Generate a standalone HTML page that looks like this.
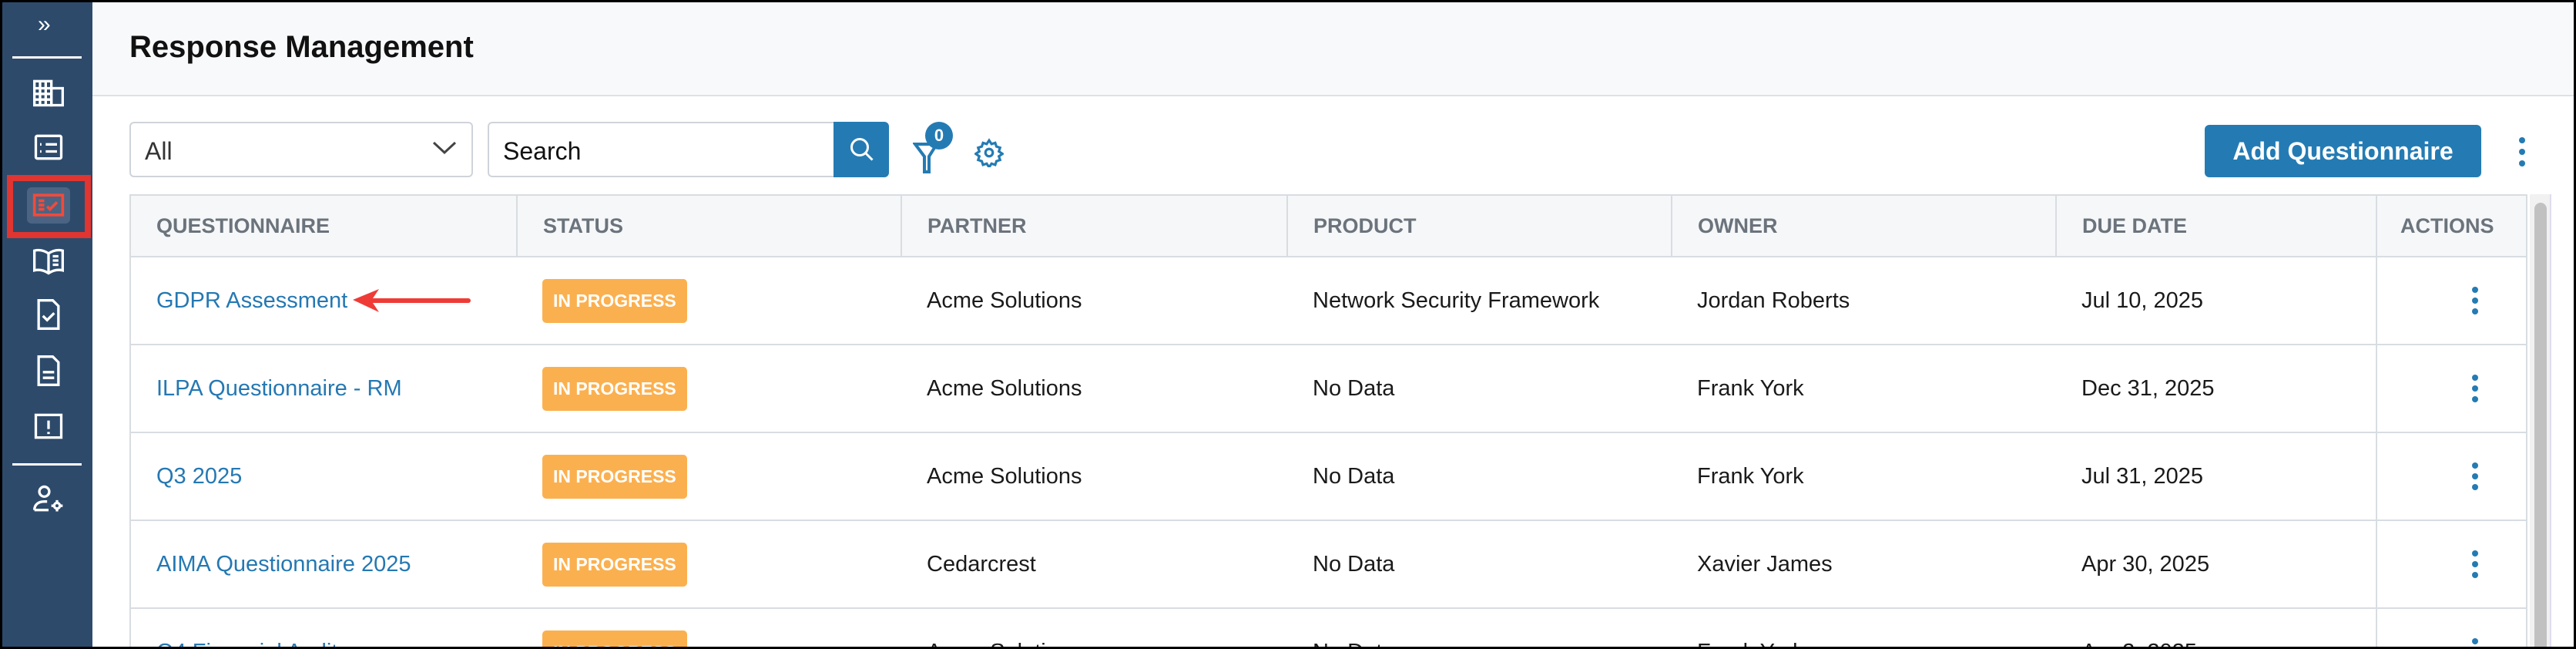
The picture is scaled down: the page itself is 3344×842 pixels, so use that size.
<!DOCTYPE html>
<html><head><meta charset="utf-8"><style>
*{box-sizing:border-box;margin:0;padding:0}
html,body{width:3344px;height:842px;overflow:hidden}
body{background:#000;font-family:"Liberation Sans",sans-serif;position:relative}
.frame{position:absolute;left:3px;top:3px;width:3338px;height:836px;background:#fff;overflow:hidden}
.side{position:absolute;left:0;top:0;width:117px;height:836px;background:#2d4a6b}
.ic{position:absolute;left:38px;width:44px;height:44px}
.hr{position:absolute;left:13px;width:90px;height:3px;background:#fff}
.head{position:absolute;left:117px;top:0;right:0;height:122px;background:#f8f9fb;border-bottom:2px solid #dce1e6}
.title{position:absolute;left:48px;top:36px;font-size:40px;font-weight:bold;color:#111}
.sel{position:absolute;left:165px;top:155px;width:446px;height:72px;border:2px solid #cfd4da;border-radius:6px;font-size:32px;color:#333;padding:18px 0 0 18px}
.srch{position:absolute;left:630px;top:155px;width:452px;height:72px;border:2px solid #cfd4da;border-right:none;border-radius:6px 0 0 6px;font-size:32px;color:#111;padding:18px 0 0 18px}
.sbtn{position:absolute;left:1079px;top:155px;width:72px;height:72px;background:#247bb3;border-radius:0 6px 6px 0}
.add{position:absolute;left:2859px;top:159px;width:359px;height:68px;background:#247bb3;border-radius:6px;color:#fff;font-size:32px;font-weight:bold;text-align:center;line-height:68px}
table{position:absolute;left:165px;top:249px;width:3113px;border-collapse:collapse;font-size:29px;table-layout:fixed}
th{height:80px;background:#f6f7f9;color:#6b737c;font-size:27px;font-weight:bold;text-align:left;padding-left:33px;border:2px solid #d8dde2}
td{height:114px;border:2px solid #d8dde2;padding-left:33px;color:#1a1a1a;border-left:none;border-right:none}
td:first-child{border-left:2px solid #d8dde2}
td:last-child{border-left:2px solid #d8dde2;border-right:2px solid #d8dde2}
td a{color:#2478b3;text-decoration:none}
.bdg{display:inline-block;background:#fbb04f;color:#fff;font-size:23px;font-weight:bold;padding:15px 14px;border-radius:5px}
.kb{position:relative;left:90px;width:8px;height:36px}
.kb i{position:absolute;left:0;width:8px;height:8px;border-radius:50%;background:#247bb3}
</style></head><body><div class="frame">
<div class="side">
<div style="position:absolute;left:46px;top:12px;color:#fff;font-size:30px">»</div>
<div class="hr" style="top:70px"></div>
<svg class="ic" style="top:95px" viewBox="0 0 24 24" fill="none" stroke="#fff" stroke-width="1.8"><rect x="2" y="4" width="12" height="17"/><rect x="14" y="9" width="8" height="12"/><path d="M6 4v17M10 4v17M2 9h12M2 13h12M2 17h12"/></svg>
<svg class="ic" style="top:166px" viewBox="0 0 24 24" fill="none" stroke="#fff" stroke-width="1.8"><rect x="3" y="4" width="18" height="16" rx="1"/><path d="M6 10h1M6 15h1M10 10h8M10 15h8"/></svg>
<div style="position:absolute;left:6px;top:224px;width:109px;height:82px;border:8px solid #e03530"></div>
<div style="position:absolute;left:32px;top:240px;width:56px;height:47px;background:#4b6483;border-radius:6px"></div>
<svg class="ic" style="top:241px" viewBox="0 0 24 24" fill="none" stroke="#f24a3a" stroke-width="2"><rect x="2" y="5" width="20" height="14"/><path d="M5 9h4M5 12h4M5 15h4M11 13l2 2 5-5"/></svg>
<svg class="ic" style="top:313px" viewBox="0 0 24 24" fill="none" stroke="#fff" stroke-width="1.8"><path d="M2 5c4-1 7 0 10 2 3-2 6-3 10-2v14c-4-1-7 0-10 2-3-2-6-3-10-2z M12 7v14M15 9h4M15 12h4M15 15h4"/></svg>
<svg class="ic" style="top:383px" viewBox="0 0 24 24" fill="none" stroke="#fff" stroke-width="1.8"><path d="M5 2h10l4 4v16H5z M8 13l3 3 5-5"/></svg>
<svg class="ic" style="top:456px" viewBox="0 0 24 24" fill="none" stroke="#fff" stroke-width="1.8"><path d="M5 2h10l4 4v16H5z M8 13h8M8 17h8"/></svg>
<svg class="ic" style="top:528px" viewBox="0 0 24 24" fill="none" stroke="#fff" stroke-width="1.8"><rect x="3" y="4" width="18" height="16"/><path d="M12 8v6M12 16v1.5"/></svg>
<div class="hr" style="top:598px"></div>
<svg class="ic" style="top:622px" viewBox="0 0 24 24" fill="none" stroke="#fff" stroke-width="1.8"><circle cx="9" cy="7" r="3.5"/><path d="M2 20c0-4 3-6 7-6h2M2 20h10"/><circle cx="18" cy="17" r="2"/><path d="M18 13v2M18 19v2M14 17h2M20 17h2"/></svg>
</div>
<div class="head"><div class="title">Response Management</div></div>
<div class="sel">All<svg style="position:absolute;right:18px;top:22px" width="34" height="20" viewBox="0 0 34 20" fill="none" stroke="#444" stroke-width="3"><path d="M3 3l14 13 14-13"/></svg></div>
<div class="srch">Search</div>
<div class="sbtn"><svg style="position:absolute;left:19px;top:18px" width="36" height="36" viewBox="0 0 24 24" fill="none" stroke="#fff" stroke-width="2"><circle cx="10" cy="10" r="7"/><path d="M15 15l6 6"/></svg></div>
<svg style="position:absolute;left:1182px;top:178px" width="34" height="44" viewBox="0 0 16 22" fill="none" stroke="#247bb3" stroke-width="2"><path d="M1 3h14l-5 8v10H7V11z"/></svg>
<div style="position:absolute;left:1198px;top:155px;width:36px;height:36px;border-radius:50%;background:#247bb3;color:#fff;font-size:22px;font-weight:bold;text-align:center;line-height:36px">0</div>
<svg style="position:absolute;left:1262px;top:176px" width="38" height="38" viewBox="0 0 24 24" fill="none" stroke="#247bb3" stroke-width="2"><circle cx="12" cy="12" r="3"/><path d="M12 2l2 3 3-1 1 3 3 1-1 3 3 2-3 2 1 3-3 1-1 3-3-1-2 3-2-3-3 1-1-3-3-1 1-3-3-2 3-2-1-3 3-1 1-3 3 1z"/></svg>
<div class="add">Add Questionnaire</div>
<div style="position:absolute;left:3267px;top:175px;width:8px;height:46px"><i style="position:absolute;top:0;width:8px;height:8px;border-radius:50%;background:#247bb3"></i><i style="position:absolute;top:15px;width:8px;height:8px;border-radius:50%;background:#247bb3"></i><i style="position:absolute;top:30px;width:8px;height:8px;border-radius:50%;background:#247bb3"></i></div>
<table>
<colgroup><col style="width:502px"><col style="width:499px"><col style="width:501px"><col style="width:499px"><col style="width:499px"><col style="width:416px"><col></colgroup>
<tr><th>QUESTIONNAIRE</th><th>STATUS</th><th>PARTNER</th><th>PRODUCT</th><th>OWNER</th><th>DUE DATE</th><th style="padding-left:30px">ACTIONS</th></tr>
<tr><td><a>GDPR Assessment</a><svg style="position:absolute;left:285px;top:118px" width="160" height="36" viewBox="0 0 160 36"><path d="M4 18L38 4 30 16h124a3 3 0 010 6H30l8 12z" fill="#ef3b36"/></svg></td><td><span class="bdg">IN PROGRESS</span></td><td>Acme Solutions</td><td>Network Security Framework</td><td>Jordan Roberts</td><td>Jul 10, 2025</td><td><div class="kb"><i style="top:0"></i><i style="top:14px"></i><i style="top:28px"></i></div></td></tr>
<tr><td><a>ILPA Questionnaire - RM</a></td><td><span class="bdg">IN PROGRESS</span></td><td>Acme Solutions</td><td>No Data</td><td>Frank York</td><td>Dec 31, 2025</td><td><div class="kb"><i style="top:0"></i><i style="top:14px"></i><i style="top:28px"></i></div></td></tr>
<tr><td><a>Q3 2025</a></td><td><span class="bdg">IN PROGRESS</span></td><td>Acme Solutions</td><td>No Data</td><td>Frank York</td><td>Jul 31, 2025</td><td><div class="kb"><i style="top:0"></i><i style="top:14px"></i><i style="top:28px"></i></div></td></tr>
<tr><td><a>AIMA Questionnaire 2025</a></td><td><span class="bdg">IN PROGRESS</span></td><td>Cedarcrest</td><td>No Data</td><td>Xavier James</td><td>Apr 30, 2025</td><td><div class="kb"><i style="top:0"></i><i style="top:14px"></i><i style="top:28px"></i></div></td></tr>
<tr><td><a>Q4 Financial Audit</a></td><td><span class="bdg">IN PROGRESS</span></td><td>Acme Solutions</td><td>No Data</td><td>Frank York</td><td>Apr 2, 2025</td><td><div class="kb"><i style="top:0"></i><i style="top:14px"></i><i style="top:28px"></i></div></td></tr>
</table>
<div style="position:absolute;left:3281px;top:249px;width:28px;height:600px;background:#f1f1f1;border-right:2px solid #dde"></div>
<div style="position:absolute;left:3287px;top:260px;width:16px;height:600px;background:#c1c1c1;border-radius:8px"></div>
</div></body></html>
